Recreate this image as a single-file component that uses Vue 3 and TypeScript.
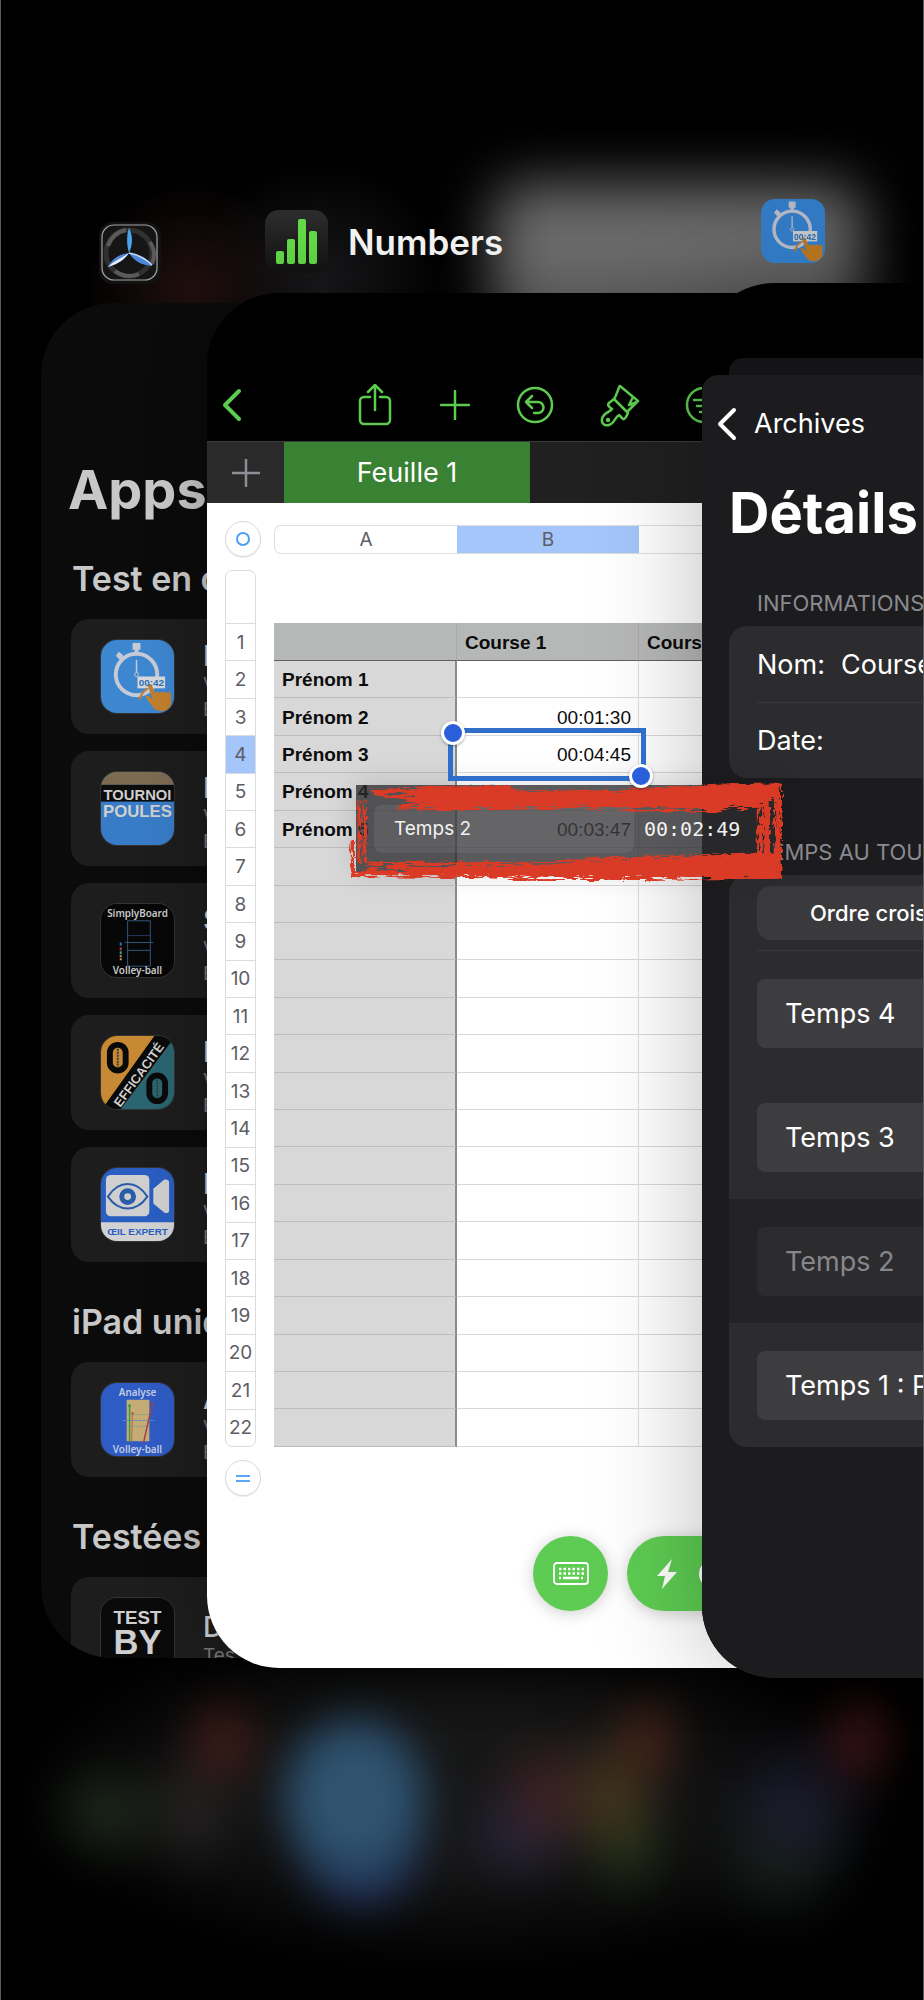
<script setup lang="ts">
interface IconText {
  text: string
  y: number
  size: number
  fill: string
  kind: string
  x?: number
  rotate?: number
}

interface AppEntry {
  icon: string
  title: string
  line: string
  detail: string
  texts: IconText[]
}

interface AppGroup {
  title: string
  apps: AppEntry[]
}

interface SheetRow {
  name: string
  time: string
  selected?: boolean
}

interface Lap {
  label: string
  dragged?: boolean
}

const chronoText: IconText = { text: '00:42', x: 51, y: 47, size: 10, fill: '#2d71b4', kind: 't-bold' }

const groups: AppGroup[] = [
  {
    title: 'Test en c',
    apps: [
      { icon: 'chrono', title: 'E', line: 'V', detail: 'E', texts: [chronoText] },
      {
        icon: 'tournoi',
        title: 'E',
        line: 'V',
        detail: 'E',
        texts: [
          { text: 'TOURNOI', y: 28, size: 15, fill: '#cfcfcf', kind: 't-bold' },
          { text: 'POULES', y: 46, size: 17, fill: '#cfcfcf', kind: 't-bold' },
        ],
      },
      {
        icon: 'board',
        title: 'S',
        line: 'V',
        detail: 'E',
        texts: [
          { text: 'SimplyBoard', y: 13, size: 10, fill: '#c8c8c8', kind: 't-hum' },
          { text: 'Volley-ball', y: 71, size: 10, fill: '#c8c8c8', kind: 't-hum' },
        ],
      },
      {
        icon: 'efficacite',
        title: 'P',
        line: 'V',
        detail: 'E',
        texts: [{ text: 'EFFICACITÉ', x: 42, y: 42, size: 13, fill: '#d2d2d2', kind: 't-bold', rotate: -54 }],
      },
      {
        icon: 'oeil',
        title: 'E',
        line: 'V',
        detail: 'E',
        texts: [{ text: 'ŒIL EXPERT', y: 68, size: 10, fill: '#2a5ec2', kind: 't-bold' }],
      },
    ],
  },
  {
    title: 'iPad uniq',
    apps: [
      {
        icon: 'analyse',
        title: 'A',
        line: 'V',
        detail: 'E',
        texts: [
          { text: 'Analyse', y: 13, size: 10, fill: '#c3cbe2', kind: 't-hum' },
          { text: 'Volley-ball', y: 71, size: 10, fill: '#c3cbe2', kind: 't-hum' },
        ],
      },
    ],
  },
  {
    title: 'Testées',
    apps: [
      {
        icon: 'testby',
        title: 'D',
        line: 'Tes',
        detail: '',
        texts: [
          { text: 'TEST', y: 26, size: 19, fill: '#cfcfcf', kind: 't-bold' },
          { text: 'BY', y: 57, size: 35, fill: '#cfcfcf', kind: 't-bold' },
        ],
      },
    ],
  },
]

const filled: SheetRow[] = [
  { name: 'Prénom 1', time: '' },
  { name: 'Prénom 2', time: '00:01:30' },
  { name: 'Prénom 3', time: '00:04:45', selected: true },
  { name: 'Prénom 4', time: '' },
  { name: 'Prénom 5', time: '00:03:47' },
]
const rows: SheetRow[] = [
  ...filled,
  ...Array.from({ length: 16 }, () => ({ name: '', time: '' })),
]

const laps: Lap[] = [
  { label: 'Temps 4' },
  { label: 'Temps 3' },
  { label: 'Temps 2', dragged: true },
  { label: 'Temps 1 : P' },
]
</script>

<template>
  <main class="switcher">
    <svg class="defs" aria-hidden="true">
      <symbol id="ic-chrono" viewBox="0 0 74 74">
        <rect width="74" height="74" fill="#3d86d0" />
        <g fill="none" stroke="#c6c9d6">
          <circle cx="36" cy="35" r="21" stroke-width="4" />
          <path d="M36 20v13" stroke-width="1.5" />
          <circle cx="36" cy="35" r="2" stroke-width="1" />
          <path d="M36 18v2M21 35h-2M25 24l-1-1M47 24l1-1M25 46l-1 1M36 51v2" stroke="#5d7fa8" stroke-width="1" />
        </g>
        <path d="M32 3h8v7h-2v4h-4v-4h-2zM15 16l3-4 4 3 1 3-3 3z" fill="#c6c9d6" />
        <rect x="37" y="37" width="28" height="12" fill="#d6d8dc" />
        <path d="M39 61c1-6 4-9 8-12" fill="none" stroke="#c27f2c" stroke-width="2" />
        <path d="M48 45c2-1 3 0 4 2l3 7c1-2 3-2 4 0 1-2 3-2 4 0 1-2 3-2 4 0 2-2 4-1 4 1v8c0 6-5 9-10 9-6 0-8-3-10-6l-5-7c-2-3 2-3 4-1l3 3-5-13c-1-1-1-2 0-3z" fill="#c27f2c" />
      </symbol>
      <symbol id="ic-tournoi" viewBox="0 0 74 74">
        <rect width="74" height="74" fill="#387bc6" />
        <rect width="74" height="13" fill="#7c6a51" />
        <rect y="13" width="74" height="17" fill="#0c0c0c" />
      </symbol>
      <symbol id="ic-board" viewBox="0 0 74 74">
        <rect width="74" height="74" fill="#070707" />
        <path d="M27 17h23v46H27zM27 47h23M24 39h29" fill="none" stroke="#31587c" />
        <path d="M27 32h23" stroke="#27385e" />
        <path d="M20 39v3" stroke="#2f78b8" stroke-width="2" />
        <path d="M20 44v3" stroke="#b04a4a" stroke-width="2" />
        <path d="M20 48v3" stroke="#36a0a0" stroke-width="2" />
        <path d="M20 52v6" stroke="#c89a50" stroke-width="2" stroke-dasharray="2 1" />
      </symbol>
      <symbol id="ic-efficacite" viewBox="0 0 74 74">
        <rect width="74" height="74" fill="#0a0a0a" />
        <path d="M0 0h54L4 70l-4 4z" fill="#c78933" />
        <path d="M74 2v72H20z" fill="#2b6571" />
        <g fill="none" stroke="#0a0a0a" stroke-width="6">
          <rect x="9" y="9" width="16" height="26" rx="8" />
          <rect x="49" y="40" width="16" height="26" rx="8" />
        </g>
        <path d="M17 13v19M57 44v19" stroke="#33403c" stroke-width="2" stroke-dasharray="2 1" />
      </symbol>
      <symbol id="ic-oeil" viewBox="0 0 74 74">
        <rect width="74" height="74" fill="#2a5ec2" />
        <rect y="55" width="74" height="19" fill="#d2d2d2" />
        <rect x="5" y="7" width="44" height="42" rx="5" fill="#cfcfcf" />
        <path d="M53 21l11-9c2-1 5 0 5 2v29c0 3-3 3-5 2l-11-9z" fill="#cfcfcf" />
        <path d="M7 29c11-17 29-17 40 0-11 16-29 16-40 0z" fill="none" stroke="#2a5ca8" stroke-width="2" />
        <circle cx="27" cy="29" r="6" fill="none" stroke="#2a5ca8" stroke-width="5" />
      </symbol>
      <symbol id="ic-analyse" viewBox="0 0 74 74">
        <rect width="74" height="74" fill="#2f5bc4" />
        <rect x="26" y="17" width="23" height="42" fill="#c5ab74" />
        <path d="M26 32h23M26 44h23" stroke="#8fa58a" />
        <path d="M22 38h33" stroke="#5d8ac0" stroke-dasharray="3 1" />
        <path d="M29 59V23" stroke="#3a9a4a" stroke-width="1.5" />
        <path d="M31 60l1-29" stroke="#c0653f" />
        <path d="M43 61l9-40" stroke="#a5404f" stroke-width="1.5" />
        <circle cx="29" cy="23" r="1.5" fill="#3a9a4a" />
        <circle cx="32" cy="31" r="1.5" fill="#c0653f" />
        <circle cx="52" cy="21" r="1.5" fill="#a5404f" />
      </symbol>
      <symbol id="ic-testby" viewBox="0 0 74 74">
        <rect width="74" height="74" fill="#0a0a0a" />
      </symbol>
    </svg>

    <div class="backdrop" aria-hidden="true">
      <div class="glow"></div>
      <div class="dock"></div>
    </div>

    <!-- Test app catalogue -->
    <section class="card card-apps" aria-label="Apps">
      <header class="card-head">
        <svg class="head-icon small" viewBox="0 0 62 62" aria-hidden="true">
          <rect width="62" height="62" rx="14" fill="#121212" />
          <rect x="3" y="3" width="55" height="55" rx="12" fill="#151515" stroke="#a5a5a5" stroke-width="1.2" />
          <circle cx="30" cy="31" r="23" fill="none" stroke="#303030" stroke-width="5" />
          <path d="M9 24A23 23 0 0 1 27 8M51 20a23 23 0 0 1 2 22M40 52a23 23 0 0 1-24-3" fill="none" stroke="#5a5a5a" stroke-width="4" />
          <path d="M30 31C27 21 28 11 30 6c4 8 4 16 0 25z" fill="#4ba3e8" />
          <path d="M30 31C24 40 15 43 9 45c4-8 11-13 21-14z" fill="#4d86d8" />
          <path d="M30 31C24 40 15 43 9 45c7-7 14-9 21-14z" fill="#e8eefc" />
          <path d="M30 31c12 1 19 6 23 13-11-1-18-5-23-13z" fill="#4d86d8" />
          <path d="M30 31c10 2 17 6 23 12" fill="none" stroke="#c7d8f5" stroke-width="1.5" />
        </svg>
      </header>
      <div class="window apps">
        <h1 class="apps-title">Apps</h1>
        <section v-for="group in groups" :key="group.title" class="group">
          <h2>{{ group.title }}</h2>
          <ul>
            <li v-for="(app, i) in group.apps" :key="i" class="app">
              <svg class="app-icon" viewBox="0 0 74 74" aria-hidden="true">
                <use :href="'#ic-' + app.icon" width="74" height="74" />
                <text
                  v-for="t in app.texts"
                  :key="t.text"
                  :class="t.kind"
                  :font-size="t.size"
                  :fill="t.fill"
                  :transform="`translate(${t.x ?? 37} ${t.y}) rotate(${t.rotate ?? 0})`"
                  text-anchor="middle"
                >{{ t.text }}</text>
              </svg>
              <div class="app-text">
                <strong>{{ app.title }}</strong>
                <span>{{ app.line }}</span>
                <span v-if="app.detail">{{ app.detail }}</span>
              </div>
            </li>
          </ul>
        </section>
      </div>
    </section>

    <!-- Spreadsheet -->
    <section class="card card-numbers" aria-label="Numbers">
      <header class="card-head">
        <svg class="head-icon" viewBox="0 0 63 63" aria-hidden="true">
          <defs>
            <linearGradient id="nb" x2="0" y2="1"><stop stop-color="#2d2d2d" /><stop offset="1" stop-color="#121212" /></linearGradient>
          </defs>
          <rect width="63" height="63" rx="14" fill="url(#nb)" />
          <g fill="#63d848">
            <rect x="11" y="41" width="8" height="13" rx="2" />
            <rect x="22" y="29" width="8" height="25" rx="2" />
            <rect x="33" y="9" width="8" height="45" rx="2" />
            <rect x="44" y="21" width="8" height="33" rx="2" />
          </g>
        </svg>
        <span class="head-name">Numbers</span>
      </header>
      <div class="window numbers">
        <nav class="toolbar" aria-label="Outils">
          <button type="button" aria-label="Retour">
            <svg width="20" height="34" viewBox="0 0 20 34"><path d="M17 3L3 17l14 14" stroke-width="4" /></svg>
          </button>
          <button type="button" class="share" aria-label="Partager">
            <svg width="34" height="42" viewBox="0 0 34 42"><path d="M12 13H6a4 4 0 0 0-4 4v19a4 4 0 0 0 4 4h22a4 4 0 0 0 4-4V17a4 4 0 0 0-4-4h-6M17 26V2M10 8l7-7 7 7" /></svg>
          </button>
          <button type="button" class="add" aria-label="Ajouter">
            <svg width="30" height="30" viewBox="0 0 30 30"><path d="M15 1v28M1 15h28" /></svg>
          </button>
          <button type="button" class="undo" aria-label="Annuler">
            <svg width="38" height="38" viewBox="0 0 38 38"><circle cx="19" cy="19" r="17" /><path d="M16 10l-6 6 6 6M10 16h12a5 5 0 0 1 0 11h-4" /></svg>
          </button>
          <button type="button" class="brush" aria-label="Format">
            <svg width="40" height="44" viewBox="0 0 40 44"><path d="M20 3c-2 2-3 9-6 13l13 13 11-11zM14 16l-5 4c-2 2 0 4 3 6-2 3-9 4-10 10-1 5 3 7 7 6 5-1 6-8 10-10l4 4c2 1 4-4 5-6zM37 19l-8 3 4-8" /><circle cx="8" cy="37" r="1" /></svg>
          </button>
          <button type="button" class="more" aria-label="Organiser">
            <svg width="38" height="38" viewBox="0 0 38 38"><circle cx="19" cy="19" r="17" /><path d="M9 14h20M12 20h14M15 26h8" /></svg>
          </button>
        </nav>
        <div class="tabs">
          <button type="button" class="tab-add" aria-label="Nouvelle feuille">
            <svg width="30" height="30" viewBox="0 0 30 30" aria-hidden="true"><path d="M15 1v28M1 15h28" fill="none" stroke="#8f8d98" stroke-width="2.5" /></svg>
          </button>
          <button type="button" class="tab">Feuille 1</button>
        </div>
        <div class="sheet">
          <div class="column-row">
            <button type="button" class="round" aria-label="Sélectionner le tableau"><i class="ring"></i></button>
            <div class="columns">
              <span>A</span>
              <span class="picked">B</span>
              <span class="rest"></span>
            </div>
          </div>
          <div class="grid-row">
            <ol class="gutter">
              <li class="blank"></li>
              <li v-for="n in 22" :key="n" :class="{ picked: n === 4 }">{{ n }}</li>
            </ol>
            <table>
              <thead>
                <tr><th></th><th>Course 1</th><th>Course 2</th></tr>
              </thead>
              <tbody>
                <tr v-for="(row, i) in rows" :key="i">
                  <th scope="row">{{ row.name }}</th>
                  <td>{{ row.time }}<span v-if="row.selected" class="selection"></span></td>
                  <td></td>
                </tr>
              </tbody>
            </table>
          </div>
          <button type="button" class="round equal" aria-label="Ajouter une ligne"><i></i></button>
          <div class="actions">
            <button type="button" class="key" aria-label="Clavier">
              <svg width="36" height="23" viewBox="0 0 36 23" aria-hidden="true">
                <rect x="1" y="1" width="34" height="21" rx="3" fill="none" stroke="#fff" stroke-width="1.8" />
                <path d="M6 7h26M6 11.5h26" stroke="#fff" stroke-width="2.5" stroke-dasharray="2.5 2" />
                <path d="M6 16h2M10 16h16M28 16h2" stroke="#fff" stroke-width="2.5" />
              </svg>
            </button>
            <button type="button" class="quick" aria-label="Actions">
              <svg width="20" height="32" viewBox="0 0 20 32" aria-hidden="true"><path d="M15 1L0 18h8L5 31l15-17h-9z" fill="#fff" /></svg>
              <svg width="30" height="30" viewBox="0 0 30 30" aria-hidden="true"><circle cx="15" cy="15" r="12" fill="none" stroke="#fff" stroke-width="4" /></svg>
            </button>
          </div>
        </div>
      </div>
    </section>

    <!-- Stopwatch archive -->
    <section class="card card-chrono" aria-label="Archives">
      <header class="card-head">
        <svg class="head-icon chrono" viewBox="0 0 74 74" aria-hidden="true">
          <use href="#ic-chrono" width="74" height="74" />
          <text :class="chronoText.kind" :x="chronoText.x" :y="chronoText.y" :font-size="chronoText.size" :fill="chronoText.fill" text-anchor="middle">{{ chronoText.text }}</text>
        </svg>
      </header>
      <div class="window chrono-window">
        <div class="behind"></div>
        <div class="details">
          <button type="button" class="back">
            <svg width="20" height="34" viewBox="0 0 20 34" aria-hidden="true"><path d="M17 3L3 17l14 14" fill="none" stroke="#fff" stroke-width="4" stroke-linecap="round" stroke-linejoin="round" /></svg>
            Archives
          </button>
          <h1>Détails</h1>
          <h2>INFORMATIONS</h2>
          <dl class="panel">
            <div><dt>Nom:</dt><dd>Course</dd></div>
            <div><dt>Date:</dt><dd></dd></div>
          </dl>
          <h2 class="second">TEMPS AU TOUR</h2>
          <div class="panel">
            <div class="order"><button type="button">Ordre croissant</button></div>
            <div v-for="lap in laps" :key="lap.label" class="lap" :class="{ dragged: lap.dragged }">
              <button type="button">{{ lap.label }}</button>
            </div>
          </div>
        </div>
      </div>
    </section>

    <!-- Lap being dragged between the two apps -->
    <div class="drag">
      <span class="drag-name">Temps 2</span>
      <span class="drag-time">00:02:49</span>
      <svg class="marker" viewBox="0 0 1380 420" aria-hidden="true">
        <defs>
          <filter id="rough" x="-5%" y="-20%" width="110%" height="140%">
            <feTurbulence type="fractalNoise" baseFrequency="0.03 0.2" numOctaves="3" seed="7" result="n" />
            <feDisplacementMap in="SourceGraphic" in2="n" scale="18" xChannelSelector="R" yChannelSelector="G" />
          </filter>
          <filter id="dry" x="-5%" y="-20%" width="110%" height="140%">
            <feTurbulence type="fractalNoise" baseFrequency="0.02 0.12" numOctaves="4" seed="3" result="n" />
            <feDisplacementMap in="SourceGraphic" in2="n" scale="24" xChannelSelector="R" yChannelSelector="G" result="d" />
            <feColorMatrix in="n" values="0 0 0 0 0  0 0 0 0 0  0 0 0 0 0  0 22 0 0 -12" result="holes" />
            <feComposite in="d" in2="holes" operator="out" />
          </filter>
          <filter id="dryv" x="-30%" y="-10%" width="160%" height="120%">
            <feTurbulence type="fractalNoise" baseFrequency="0.15 0.04" numOctaves="4" seed="5" result="n" />
            <feDisplacementMap in="SourceGraphic" in2="n" scale="18" xChannelSelector="R" yChannelSelector="G" result="d" />
            <feColorMatrix in="n" values="0 0 0 0 0  0 0 0 0 0  0 0 0 0 0  0 22 0 0 -12.5" result="holes" />
            <feComposite in="d" in2="holes" operator="out" />
          </filter>
        </defs>
        <g fill="#d93a25">
          <g filter="url(#dry)">
            <path d="M84 88L260 78l240-3 40 16 260-4 120-6 200-8 178-2v40l-30 30-160 16-150-4-240-8-400 8-150-8 30-26-90-16z" />
            <path d="M80 304l360-4 100 6 300-20 400-8 80 4v74l-420 4-300 0-200-6-370-2v-8h50z" />
          </g>
          <g filter="url(#rough)">
            <path d="M190 92l70-8 240-8 40 20 280 0 140-10 170-12 186-4-6 40-60 24-170 12-150-6-210-4-430 8z" />
            <path d="M240 322l300-4 300-18 390-18 92 2-2 68-320-2-360-2-400-6z" />
            <path d="M36 334h500v12H36z" />
          </g>
          <g filter="url(#dryv)">
            <path d="M1302 68h24v286h-24zM1250 134h40v160h-40zM1262 100h24v50h-24zM52 120h12v190H52zM68 120h13v190H68zM32 240h10v110H32z" />
          </g>
          <path d="M1308 74l8 2 6 274h-12zM1274 100l10-4 4 190h-14z" />
        </g>
      </svg>
    </div>
  </main>
</template>

<style>
body {
  margin: 0;
  background: #000;
}
</style>

<style scoped>
* {
  box-sizing: border-box;
}

button {
  padding: 0;
  border: 0;
  background: none;
  color: inherit;
  font: inherit;
}

h1,
h2,
ul,
ol,
dl,
dd {
  margin: 0;
  padding: 0;
  list-style: none;
}

.switcher {
  position: relative;
  display: grid;
  grid-template-columns: minmax(0, 1fr);
  min-height: 100vh;
  overflow: hidden;
  border-left: 1px solid #5c5c5c;
  border-right: 1px solid #5c5c5c;
  background: #000;
  color: #fff;
  font-family: Inter, "Liberation Sans", sans-serif;
}

.defs {
  display: none;
}

.t-bold {
  font-family: "Liberation Sans", sans-serif;
  font-weight: 700;
}

.t-hum {
  font-family: "Noto Sans", sans-serif;
  font-weight: 600;
}

.backdrop,
.card {
  grid-area: 1 / 1;
}

.backdrop {
  display: flex;
  flex-direction: column;
  justify-content: space-between;
  overflow: hidden;
  background:
    radial-gradient(circle at 190px 290px, #20100f, transparent 110px),
    radial-gradient(circle at 320px 290px, #1a1a1d, transparent 130px);
}

.glow {
  height: 170px;
  margin: 184px 60px 0 492px;
  border-radius: 30px;
  background: #6b6b6b;
  filter: blur(28px);
}

.dock {
  height: 340px;
  background:
    radial-gradient(ellipse 50px 56px at 222px 82px, #451e1a, transparent),
    radial-gradient(ellipse 48px 58px at 646px 80px, #482419, transparent),
    radial-gradient(ellipse 50px 62px at 858px 80px, #401619, transparent),
    radial-gradient(ellipse 88px 98px at 354px 138px, #305470 45%, #284762 65%, transparent),
    radial-gradient(ellipse 76px 74px at 360px 192px, #253a6c 30%, transparent),
    radial-gradient(ellipse 70px 64px at 106px 152px, #1f2a1d, transparent),
    radial-gradient(ellipse 60px 80px at 190px 150px, #262323, transparent),
    radial-gradient(ellipse 58px 76px at 612px 136px, #46381d, transparent),
    radial-gradient(ellipse 64px 70px at 548px 136px, #422224, transparent),
    radial-gradient(ellipse 64px 64px at 518px 172px, #25253e, transparent),
    radial-gradient(ellipse 54px 64px at 626px 186px, #1f3018, transparent),
    radial-gradient(ellipse 84px 84px at 796px 145px, #1c1d30, transparent),
    radial-gradient(ellipse 84px 84px at 780px 195px, #18211a, transparent),
    radial-gradient(ellipse 440px 180px at 50% 130px, #161616 40%, transparent);
  filter: blur(17px);
}

.card {
  position: relative;
  display: flex;
  flex-direction: column;
}

.card-apps {
  margin: 222px 0 342px 40px;
}

.card-numbers {
  margin: 210px 0 332px 206px;
}

.card-chrono {
  margin: 199px 0 322px 701px;
}

.card-head {
  display: flex;
  align-items: center;
  gap: 20px;
  padding: 0 0 20px 58px;
}

.card-apps .card-head {
  padding-bottom: 19px;
}

.head-icon {
  flex: none;
  width: 63px;
  height: 63px;
}

.head-icon.small {
  width: 62px;
  height: 62px;
}

.head-icon.chrono {
  width: 64px;
  height: 64px;
  border-radius: 14px;
  filter: brightness(0.9) saturate(1.1);
}

.head-name {
  color: #f4f4f4;
  font-size: 35px;
  font-weight: 600;
  line-height: 40px;
}

.window {
  flex: 1;
  overflow: hidden;
  border-radius: 72px 0 0 72px;
}

/* apps */

.apps {
  padding: 157px 0 0 27px;
  background: #0b0b0b;
  color: #c8c8c8;
}

.apps-title {
  padding-bottom: 37px;
  font-size: 54px;
  font-weight: 700;
  line-height: 60px;
}

.group {
  margin-bottom: 38px;
}

.group:last-child {
  margin-bottom: -40px;
}

.group h2 {
  padding-left: 4px;
  font-size: 34px;
  font-weight: 600;
  line-height: 44px;
}

.group ul {
  display: flex;
  flex-direction: column;
  gap: 17px;
  padding: 18px 0 0 3px;
}

.app {
  display: flex;
  gap: 28px;
  height: 115px;
  padding: 20px 0 0 29px;
  border-radius: 18px 0 0 18px;
  background: #1d1d1e;
}

.app-icon {
  flex: none;
  width: 75px;
  height: 75px;
  border: 1px solid #333;
  border-radius: 17px;
}

.app-text {
  display: flex;
  flex-direction: column;
  justify-content: center;
  height: 84px;
  color: #77777b;
  font-size: 19px;
  line-height: 25px;
}

.app-text strong {
  color: #d0d0d0;
  font-size: 28px;
  font-weight: 500;
  line-height: 32px;
}

/* numbers */

.numbers {
  display: flex;
  flex-direction: column;
  background: #000;
  box-shadow: 0 0 60px rgba(0, 0, 0, 0.3);
}

.toolbar {
  display: flex;
  align-items: center;
  height: 148px;
  padding: 76px 0 0 15px;
}

.toolbar button {
  flex: none;
  display: flex;
}

.toolbar svg {
  fill: none;
  stroke: #5dcb4f;
  stroke-width: 2.5;
  stroke-linecap: round;
  stroke-linejoin: round;
}

.share {
  margin-left: 116px;
}

.add {
  margin-left: 48px;
}

.undo {
  margin-left: 46px;
}

.brush {
  margin-left: 46px;
}

.more {
  margin-left: 45px;
}

.tabs {
  display: flex;
  height: 62px;
  border-top: 1px solid #3c3c3c;
  background: #202020;
}

.tab-add {
  display: grid;
  place-items: center;
  width: 77px;
  background: #2b2b2b;
}

.tab {
  width: 246px;
  background: #398234;
  font-size: 27px;
}

.sheet {
  flex: 1;
  padding: 18px 0 57px 18px;
  background: #fff;
  color: #5d5d66;
}

.column-row {
  display: flex;
  align-items: center;
  gap: 13px;
}

.round {
  flex: none;
  display: grid;
  place-items: center;
  width: 36px;
  height: 36px;
  border: 1px solid #dadada;
  border-radius: 50%;
  background: #fff;
  box-shadow: 0 1px 1px rgba(0, 0, 0, 0.08);
}

.ring {
  width: 14px;
  height: 14px;
  border: 2px solid #4aa0f6;
  border-radius: 50%;
}

.equal {
  margin-top: 13px;
}

.equal i {
  width: 14px;
  height: 7px;
  border: solid #5ba7f7;
  border-width: 2px 0;
}

.columns {
  flex: 1;
  display: flex;
  height: 29px;
  border: 1px solid #dedede;
  border-right: 0;
  border-radius: 7px 0 0 7px;
  font-size: 19px;
  line-height: 27px;
  text-align: center;
}

.columns span {
  width: 182px;
}

.columns .rest {
  flex: 1;
}

.picked {
  background: #a4c6fa;
}

.grid-row {
  display: flex;
  gap: 18px;
  padding-top: 13px;
}

.gutter {
  flex: none;
  display: flex;
  flex-direction: column;
  width: 31px;
  height: 877px;
  border: 1px solid #dcdcdc;
  border-radius: 7px;
  font-size: 19px;
  text-align: center;
}

.gutter li {
  flex: 1;
  display: grid;
  place-items: center;
  border-top: 1px solid #dcdcdc;
}

.gutter .blank {
  flex: none;
  height: 52px;
  border-top: 0;
}

table {
  flex: 1;
  height: 824px;
  margin-top: 53px;
  border-collapse: separate;
  border-spacing: 0;
  table-layout: fixed;
  color: #0c0c0c;
  font: 19px "Liberation Sans", sans-serif;
}

thead tr {
  height: 38px;
}

tbody tr {
  height: 37px;
}

th,
td {
  position: relative;
  padding: 2px 7px 0 8px;
  border-bottom: 1px solid #d9d9d9;
  text-align: left;
}

th:first-child {
  width: 183px;
  border-right: 2px solid #8b8b8b;
  border-bottom-color: #bdbdbd;
  background: #d8d8d8;
}

thead th,
thead th:first-child {
  border-bottom: 1px solid #616161;
  background: #b6b8b7;
}

thead th:first-child {
  border-right: 1px solid #a8aaa9;
}

thead th:nth-child(2) {
  width: 182px;
  border-right: 1px solid #a8aaa9;
}

td:nth-child(2) {
  border-right: 1px solid #dedede;
  text-align: right;
}

.selection {
  position: absolute;
  z-index: 1;
  inset: -8px -8px -9px -9px;
  border: 5px solid #2f6fc9;
}

.selection::before,
.selection::after {
  content: "";
  position: absolute;
  width: 18px;
  height: 18px;
  border: 3px solid #fff;
  border-radius: 50%;
  background: #2a5fdc;
  box-shadow: 0 1px 3px rgba(0, 0, 0, 0.35);
}

.selection::before {
  top: -12px;
  left: -12px;
}

.selection::after {
  right: -12px;
  bottom: -12px;
}

.actions {
  display: flex;
  gap: 19px;
  padding: 40px 0 0 308px;
}

.actions button {
  height: 75px;
  border-radius: 38px;
  background: #5ecc52;
  box-shadow: 0 2px 16px rgba(0, 0, 0, 0.2);
}

.key {
  display: grid;
  place-items: center;
  width: 75px;
}

.quick {
  display: flex;
  align-items: center;
  gap: 21px;
  width: 200px;
  padding-left: 30px;
}

/* stopwatch */

.chrono-window {
  display: flex;
  flex-direction: column;
  padding-top: 75px;
  background: #000;
  box-shadow: 0 0 110px rgba(0, 0, 0, 0.26);
  white-space: nowrap;
}

.card-chrono .card-head {
  padding-left: 59px;
}

.behind {
  height: 17px;
  margin-left: 27px;
  border-radius: 14px 0 0 0;
  background: #141416;
}

.details {
  flex: 1;
  padding: 32px 0 0 27px;
  border-radius: 16px 0 0 0;
  background: #1c1c1e;
}

.back {
  display: flex;
  align-items: center;
  gap: 17px;
  margin-left: -12px;
  font-size: 27px;
  line-height: 34px;
}

.details h1 {
  padding-top: 40px;
  font-size: 56px;
  font-weight: 700;
  line-height: 64px;
}

.details h2 {
  padding: 44px 0 9px 28px;
  color: #8a8a90;
  font-size: 22px;
  font-weight: 400;
  line-height: 28px;
}

.details .second {
  padding-top: 60px;
}

.panel {
  overflow: hidden;
  border-radius: 18px 0 0 18px;
  background: #2c2c2e;
}

dl.panel div {
  display: flex;
  align-items: center;
  gap: 16px;
  height: 76px;
  margin-left: 28px;
  font-size: 27px;
}

dl.panel div + div {
  border-top: 1px solid #38383a;
}

.order {
  height: 76px;
  margin-left: 28px;
  padding-top: 11px;
  border-bottom: 1px solid #38383a;
}

.order button {
  width: 100%;
  height: 54px;
  padding-left: 53px;
  border-radius: 14px 0 0 14px;
  background: #3a3a3d;
  font-size: 22px;
  font-weight: 500;
  text-align: left;
}

.lap {
  height: 124px;
  padding: 28px 0 0 28px;
}

.lap button {
  width: 100%;
  height: 69px;
  padding-left: 28px;
  border-radius: 8px 0 0 8px;
  background: #3d3d40;
  font-size: 27px;
  text-align: left;
}

.dragged {
  background: #232325;
}

.dragged button {
  background: #2c2c2e;
  color: #87878a;
}

/* dragged lap */

.drag {
  position: absolute;
  top: 785px;
  left: 355px;
  display: flex;
  align-items: center;
  gap: 10px;
  width: 424px;
  height: 87px;
  padding-left: 18px;
  background: rgba(44, 44, 46, 0.78);
  box-shadow: 0 0 30px rgba(0, 0, 0, 0.15);
  color: #f2f2f2;
  font-size: 19px;
}

.drag-name {
  width: 260px;
  height: 48px;
  padding-left: 20px;
  border-radius: 8px;
  background: rgba(255, 255, 255, 0.07);
  line-height: 48px;
}

.drag-time {
  font-family: "DejaVu Sans Mono", monospace;
  font-size: 20px;
}

.marker {
  position: absolute;
  top: -25px;
  left: -16px;
  width: 460px;
  height: 140px;
}
</style>
